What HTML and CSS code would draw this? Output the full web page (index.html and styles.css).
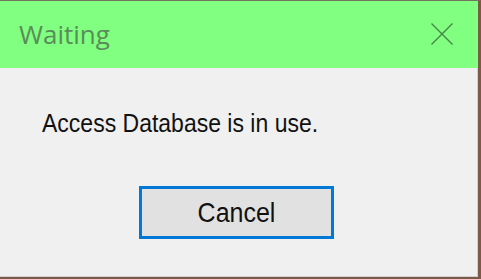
FILE: index.html
```html
<!DOCTYPE html>
<html>
<head>
<meta charset="utf-8">
<link rel="stylesheet" href="styles.css">
</head>
<body>
<div class="window">
  <div class="titlebar">
    <span class="title">Waiting</span>
    <svg class="close" width="24" height="24" viewBox="0 0 24 24"><path d="M1.5 1.5 L22.5 22.5 M22.5 1.5 L1.5 22.5" stroke="#4a844a" stroke-width="1.4" fill="none"/></svg>
  </div>
  <div class="content">
    <p class="message">Access Database is in use.</p>
    <div class="actions"><button class="btn"><span class="btn-label">Cancel</span></button></div>
  </div>
</div>
</body>
</html>
```
FILE: styles.css
```css
html, body { margin: 0; padding: 0; }
body { width: 481px; height: 279px; overflow: hidden; background: #7d5a48; }
.window {
  box-sizing: border-box;
  width: 481px; height: 279px;
  border-top: 1px solid #76705e;
  border-right: 3px solid #7d5a48;
  border-bottom: 2px solid #7d5a48;
  background: #f0f0f0;
  display: flex; flex-direction: column;
  box-shadow: inset -1px -1px 0 #cfcfcf;
}
.titlebar {
  height: 67px;
  background: #80ff80;
  display: flex; align-items: center; justify-content: space-between;
  padding: 0 24px 0 19px;
  flex-shrink: 0;
}
.title {
  font-family: "Open Sans", "Noto Sans", sans-serif;
  font-size: 26px;
  color: #5a8c5a;
  margin-top: -2px;
}
.close { margin-top: -2px; }
.content { flex: 1; display: flex; flex-direction: column; }
.message {
  margin: 42px 0 0 42px;
  font-family: "Liberation Sans", Arial, sans-serif;
  font-size: 23px;
  line-height: 26px;
  color: #111;
  transform: scaleY(1.1);
  transform-origin: left center;
}
.actions { margin-top: 50px; padding-left: 139px; }
.btn {
  box-sizing: border-box;
  width: 195px; height: 53px;
  background: #e1e1e1;
  border: 3px solid #0078d7;
  font-family: "Liberation Sans", Arial, sans-serif;
  font-size: 25px;
  color: #111;
  padding: 0;
}
.btn-label { display: inline-block; transform: scaleY(1.1); }
```
